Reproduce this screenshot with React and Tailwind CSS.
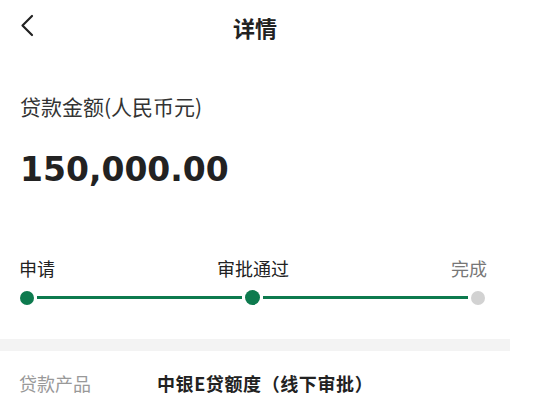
export default function App() {
  const font = { fontFamily: '"Noto Sans CJK SC", "Noto Sans", sans-serif' };
  return (
    <div className="w-[552px] h-[417px] bg-white overflow-hidden" style={font}>
      <div className="w-[510px]">
        {/* header */}
        <div className="relative h-[54px] flex items-center justify-center">
          <svg className="absolute left-[20px] top-[14px]" width="14" height="23" viewBox="0 0 14 23" fill="none">
            <path d="M12 2 L2.5 11.5 L12 21" stroke="#222" strokeWidth="2.2" strokeLinecap="round" strokeLinejoin="round" />
          </svg>
          <span className="text-[22px] font-bold text-[#222] leading-none">详情</span>
        </div>

        {/* amount */}
        <div className="px-[20px] pt-[42px]">
          <div className="text-[21px] text-[#333] leading-none">贷款金额(人民币元)</div>
          <div className="mt-[36px] text-[33px] font-bold text-[#222] leading-none" style={{ fontFamily: '"DejaVu Sans", sans-serif' }}>150,000.00</div>
        </div>

        {/* steps */}
        <div className="pl-[19px] pr-[23px] pt-[73px]">
          <div className="flex justify-between text-[18px] leading-none">
            <span className="text-[#222]">申请</span>
            <span className="text-[#222]">审批通过</span>
            <span className="text-[#777]">完成</span>
          </div>
          <div className="flex items-center mt-[13px] pl-[1px] pr-[2px]">
            <div className="w-[14px] h-[14px] rounded-full bg-[#0d7a4e] shrink-0" />
            <div className="flex-1 h-[3px] bg-[#0d7a4e] mx-[3px]" />
            <div className="w-[15px] h-[15px] rounded-full bg-[#0d7a4e] shrink-0" />
            <div className="flex-1 h-[3px] bg-[#0d7a4e] mx-[3px]" />
            <div className="w-[14px] h-[14px] rounded-full bg-[#d2d2d2] shrink-0" />
          </div>
        </div>

        {/* divider band */}
        <div className="mt-[34px] h-[12px] bg-[#f3f3f3]" />

        {/* product row */}
        <div className="flex items-center px-[19px] pt-[23px] text-[18px] leading-none">
          <span className="w-[138px] text-[#999]">贷款产品</span>
          <span className="font-bold text-[#222] tracking-[0.6px]">中银E贷额度（线下审批）</span>
        </div>
      </div>
    </div>
  );
}
